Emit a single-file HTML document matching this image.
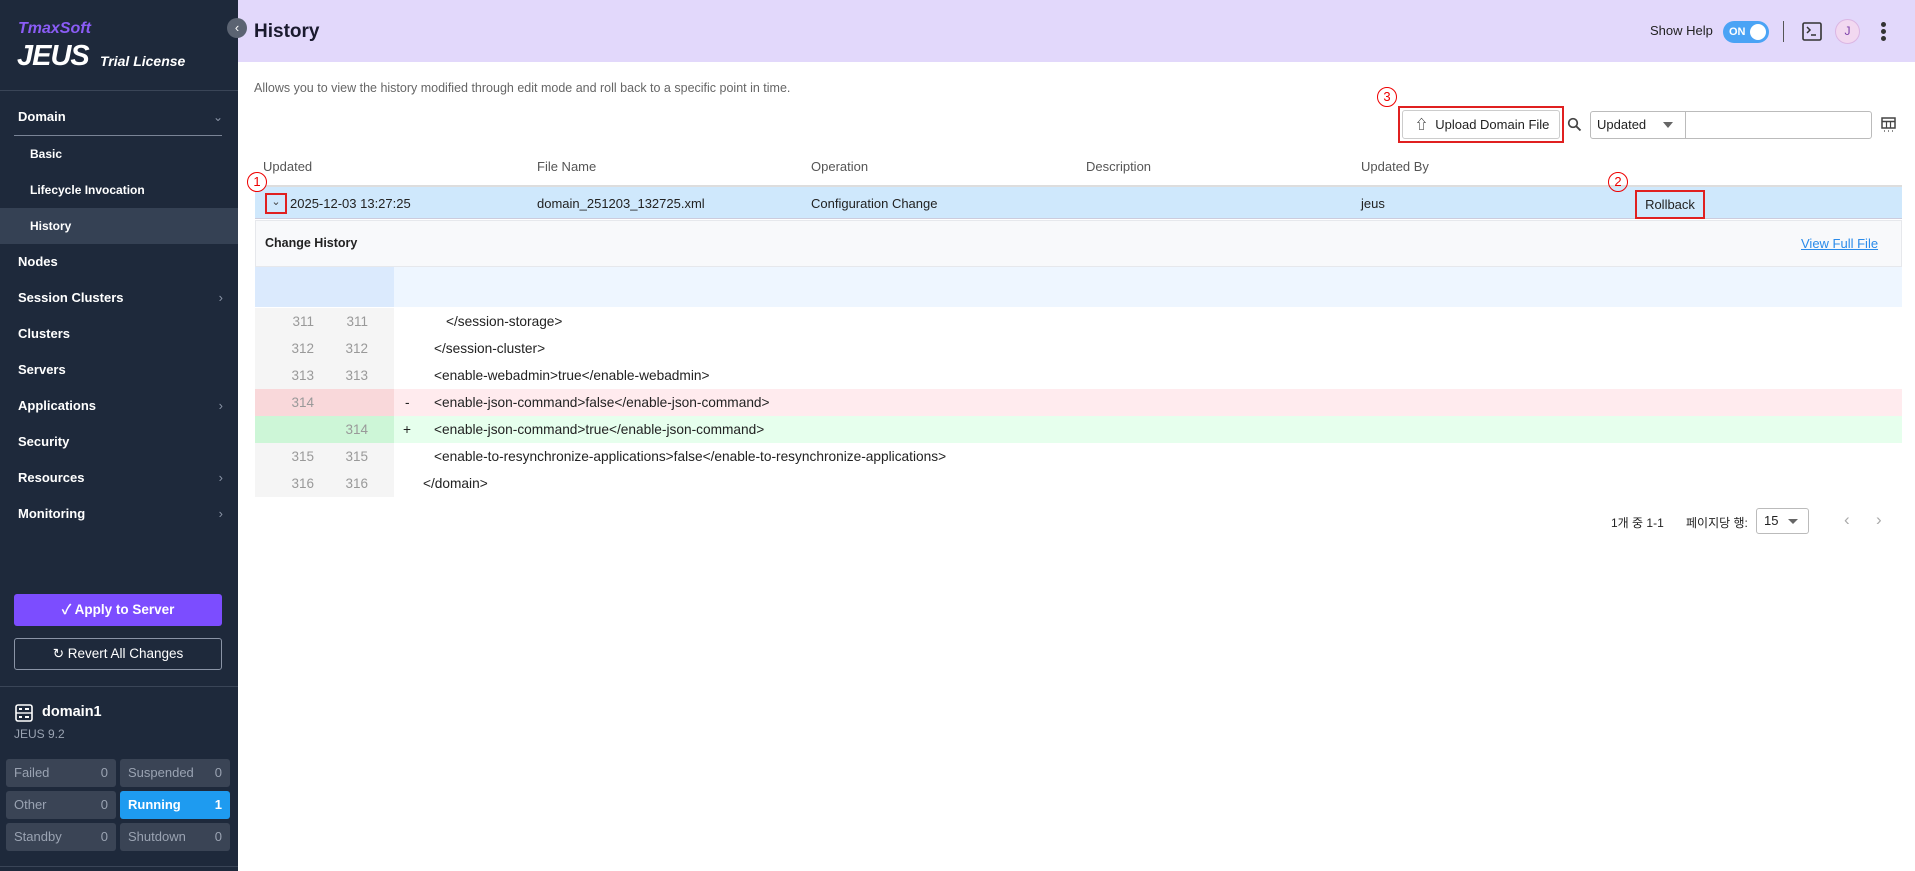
<!DOCTYPE html>
<html><head><meta charset="utf-8"><style>
*{box-sizing:border-box;margin:0;padding:0}
body{width:1915px;height:871px;overflow:hidden;font-family:"Liberation Sans","Noto Sans CJK KR",sans-serif;background:#fff;position:relative;color:#222}
.abs{position:absolute;white-space:nowrap}
#sb{position:absolute;left:0;top:0;width:238px;height:871px;background:#1e293b;color:#fff}
.nav{position:absolute;left:18px;font-size:13px;font-weight:bold;line-height:36px;height:36px;width:205px}
.sub{left:30px;font-size:12px}
.chev{position:absolute;right:0;top:0;color:#8a94a6;font-weight:normal;font-size:13px}
.st{position:absolute;height:28px;width:110px;background:#3a4455;border-radius:3px;color:#9aa3b2;font-size:13px;line-height:28px;padding:0 8px}
.st b{position:absolute;right:8px;font-weight:normal}
.th{position:absolute;top:158px;font-size:13px;color:#555}
.dl{position:absolute;left:255px;width:1647px;height:27px;font-size:13.7px;line-height:27px}
.g1,.g2{position:absolute;top:0;height:27px;background:#f5f5f5;color:#999;text-align:right;font-size:13.5px}
.g1{left:0;width:70px;padding-right:11px}.g2{left:70px;width:69px;padding-right:26px}
.cd{position:absolute;top:0;color:#222}
</style></head><body>
<div id="sb">
 <div class="abs" style="left:18px;top:20px;font-size:16px;font-weight:bold;font-style:italic;color:#8b5cf6">TmaxSoft</div>
 <div class="abs" style="left:17px;top:40px;font-size:29px;font-weight:900;font-style:italic;color:#fff;letter-spacing:-1px">JEUS</div>
 <div class="abs" style="left:100px;top:53px;font-size:14px;font-weight:bold;font-style:italic;color:#fff">Trial License</div>
 <div class="abs" style="left:0;top:90px;width:238px;height:1px;background:#3a4557"></div>
 <div class="nav" style="top:99px">Domain<span class="chev" style="font-size:12px">&#8964;</span></div>
 <div class="abs" style="left:14px;top:135px;width:208px;height:1px;background:#7a8496"></div>
 <div class="nav sub" style="top:136px">Basic</div>
 <div class="nav sub" style="top:172px">Lifecycle Invocation</div>
 <div style="position:absolute;left:0;top:208px;width:238px;height:36px;background:#354154"></div>
 <div class="nav sub" style="top:208px">History</div>
 <div class="nav" style="top:244px">Nodes</div>
 <div class="nav" style="top:280px">Session Clusters<span class="chev">›</span></div>
 <div class="nav" style="top:316px">Clusters</div>
 <div class="nav" style="top:352px">Servers</div>
 <div class="nav" style="top:388px">Applications<span class="chev">›</span></div>
 <div class="nav" style="top:424px">Security</div>
 <div class="nav" style="top:460px">Resources<span class="chev">›</span></div>
 <div class="nav" style="top:496px">Monitoring<span class="chev">›</span></div>
 <div class="abs" style="left:14px;top:594px;width:208px;height:32px;background:#7c4dff;border-radius:3px;text-align:center;line-height:32px;font-size:13.5px;font-weight:bold">✓ Apply to Server</div>
 <div class="abs" style="left:14px;top:638px;width:208px;height:32px;border:1px solid #8a94a6;border-radius:3px;text-align:center;line-height:30px;font-size:13.5px">↻ Revert All Changes</div>
 <div class="abs" style="left:0;top:686px;width:238px;height:1px;background:#3a4557"></div>
 <svg class="abs" style="left:15px;top:704px" width="18" height="18" viewBox="0 0 18 18"><rect x="1" y="1" width="16" height="16" rx="2" fill="none" stroke="#fff" stroke-width="1.6"/><line x1="1" y1="9" x2="17" y2="9" stroke="#fff" stroke-width="1.4"/><rect x="4" y="4" width="3" height="2" fill="#fff"/><rect x="10" y="4" width="4" height="2" fill="#fff"/><rect x="4" y="12" width="3" height="2" fill="#fff"/><rect x="10" y="12" width="4" height="2" fill="#fff"/></svg>
 <div class="abs" style="left:42px;top:704px;font-size:14.5px;font-weight:bold">domain1</div>
 <div class="abs" style="left:14px;top:727px;font-size:12px;color:#9aa3b2">JEUS 9.2</div>
 <div class="st" style="left:6px;top:759px">Failed<b>0</b></div>
 <div class="st" style="left:120px;top:759px">Suspended<b>0</b></div>
 <div class="st" style="left:6px;top:791px">Other<b>0</b></div>
 <div class="st" style="left:120px;top:791px;background:#1e9bf0;color:#fff;font-weight:bold">Running<b style="font-weight:bold">1</b></div>
 <div class="st" style="left:6px;top:823px">Standby<b>0</b></div>
 <div class="st" style="left:120px;top:823px">Shutdown<b>0</b></div>
 <div class="abs" style="left:0;top:866px;width:238px;height:1px;background:#3a4557"></div>
</div>
<div class="abs" style="left:238px;top:0;width:1677px;height:62px;background:#e2d8fb"></div>
<div class="abs" style="left:227px;top:18px;width:20px;height:20px;border-radius:50%;background:#5b6372;color:#fff;font-size:13px;line-height:19px;text-align:center">‹</div>
<div class="abs" style="left:254px;top:21px;font-size:19px;font-weight:bold;color:#1a1a2e">History</div>
<div class="abs" style="left:1650px;top:23px;font-size:13px;color:#222">Show Help</div>
<div class="abs" style="left:1723px;top:21px;width:46px;height:22px;border-radius:11px;background:#4aa3f5;color:#fff;font-size:11px;font-weight:bold;line-height:22px;padding-left:6px">ON<span style="position:absolute;right:3px;top:3px;width:16px;height:16px;border-radius:50%;background:#fff"></span></div>
<div class="abs" style="left:1783px;top:21px;width:1px;height:21px;background:#555"></div>
<svg class="abs" style="left:1802px;top:22px" width="20" height="19" viewBox="0 0 20 19"><rect x="1" y="1" width="18" height="17" rx="1.5" fill="none" stroke="#333" stroke-width="1.6"/><path d="M5 5l3 3-3 3" fill="none" stroke="#333" stroke-width="1.5"/><line x1="9" y1="13" x2="14" y2="13" stroke="#333" stroke-width="1.5"/></svg>
<div class="abs" style="left:1835px;top:19px;width:25px;height:25px;border-radius:50%;background:#f2d8f0;border:1px solid #dbb6e3;color:#7b3ea8;font-size:12px;text-align:center;line-height:23px">J</div>
<div class="abs" style="left:1881px;top:22px;width:5px;height:5px;border-radius:50%;background:#333;box-shadow:0 7px 0 #333,0 14px 0 #333"></div>
<div class="abs" style="left:254px;top:81px;font-size:12.5px;color:#666">Allows you to view the history modified through edit mode and roll back to a specific point in time.</div>
<div class="abs" style="left:1377px;top:87px;width:20px;height:20px;border:1.5px solid #e00;border-radius:50%;color:#e00;font-size:13px;text-align:center;line-height:17px">3</div>
<div class="abs" style="left:1398px;top:106px;width:166px;height:37px;border:2px solid #e02020"></div>
<div class="abs" style="left:1402px;top:110px;width:158px;height:29px;border:1px solid #ccc;border-radius:3px;font-size:13px;line-height:27px;padding-left:12px">⇧&nbsp; Upload Domain File</div>
<svg class="abs" style="left:1567px;top:117px" width="15" height="15" viewBox="0 0 15 15"><circle cx="6" cy="6" r="4.3" fill="none" stroke="#444" stroke-width="1.7"/><line x1="9" y1="9" x2="13.5" y2="13.5" stroke="#444" stroke-width="1.9"/></svg>
<div class="abs" style="left:1590px;top:111px;width:282px;height:28px;border:1px solid #bbb;border-radius:3px"></div>
<div class="abs" style="left:1685px;top:111px;width:1px;height:28px;background:#bbb"></div>
<div class="abs" style="left:1597px;top:117px;font-size:13px">Updated</div>
<div class="abs" style="left:1663px;top:122px;border:5px solid transparent;border-top:6px solid #666"></div>
<svg class="abs" style="left:1881px;top:117px" width="15" height="16" viewBox="0 0 15 16"><rect x="1" y="1" width="13" height="10" fill="none" stroke="#444" stroke-width="1.5"/><line x1="1" y1="4.5" x2="14" y2="4.5" stroke="#444" stroke-width="1.5"/><line x1="5.5" y1="4.5" x2="5.5" y2="11" stroke="#444" stroke-width="1.2"/><line x1="9.5" y1="4.5" x2="9.5" y2="11" stroke="#444" stroke-width="1.2"/><path d="M3 14h1M7 14h1M11 14h1" stroke="#444" stroke-width="1.2"/></svg>
<div class="th" style="left:263px;top:159px">Updated</div>
<div class="th" style="left:537px;top:159px">File Name</div>
<div class="th" style="left:811px;top:159px">Operation</div>
<div class="th" style="left:1086px;top:159px">Description</div>
<div class="th" style="left:1361px;top:159px">Updated By</div>
<div class="abs" style="left:255px;top:185px;width:1647px;height:2px;background:#ddd"></div>
<div class="abs" style="left:255px;top:187px;width:1647px;height:32px;background:#cfe8fc;border-bottom:1px solid #ccd"></div>
<div class="abs" style="left:247px;top:172px;width:20px;height:20px;border:1.5px solid #e00;border-radius:50%;color:#e00;font-size:13px;text-align:center;line-height:17px;background:#fff">1</div>
<div class="abs" style="left:265px;top:193px;width:22px;height:21px;border:2px solid #e02020;color:#444;font-size:11px;text-align:center;line-height:14px">&#8964;</div>
<div class="abs" style="left:290px;top:196px;font-size:13px">2025-12-03 13:27:25</div>
<div class="abs" style="left:537px;top:196px;font-size:13px">domain_251203_132725.xml</div>
<div class="abs" style="left:811px;top:196px;font-size:13px">Configuration Change</div>
<div class="abs" style="left:1361px;top:196px;font-size:13px">jeus</div>
<div class="abs" style="left:1608px;top:172px;width:20px;height:20px;border:1.5px solid #e00;border-radius:50%;color:#e00;font-size:13px;text-align:center;line-height:17px">2</div>
<div class="abs" style="left:1635px;top:190px;width:70px;height:29px;border:2px solid #e02020;font-size:13px;text-align:center;line-height:25px">Rollback</div>
<div class="abs" style="left:255px;top:220px;width:1647px;height:47px;background:#f8f9fb;border:1px solid #e6e8ec"></div>
<div class="abs" style="left:265px;top:236px;font-size:12.5px;font-weight:bold">Change History</div>
<div class="abs" style="left:1801px;top:236px;font-size:13px;color:#2a8bea;text-decoration:underline">View Full File</div>
<div class="abs" style="left:255px;top:267px;width:139px;height:40px;background:#dbeafd"></div>
<div class="abs" style="left:394px;top:267px;width:1508px;height:40px;background:#eef6ff"></div>
<div class="dl" style="top:308px"><div class="g1">311</div><div class="g2">311</div><div class="cd" style="left:191px">&lt;/session-storage&gt;</div></div>
<div class="dl" style="top:335px"><div class="g1">312</div><div class="g2">312</div><div class="cd" style="left:179px">&lt;/session-cluster&gt;</div></div>
<div class="dl" style="top:362px"><div class="g1">313</div><div class="g2">313</div><div class="cd" style="left:179px">&lt;enable-webadmin&gt;true&lt;/enable-webadmin&gt;</div></div>
<div class="dl" style="top:389px;background:#ffebee"><div class="g1" style="background:#f9d8da">314</div><div class="g2" style="background:#f9d8da"></div><div class="cd" style="left:150px">-</div><div class="cd" style="left:179px">&lt;enable-json-command&gt;false&lt;/enable-json-command&gt;</div></div>
<div class="dl" style="top:416px;background:#e6ffed"><div class="g1" style="background:#cdf6d7"></div><div class="g2" style="background:#cdf6d7">314</div><div class="cd" style="left:148px">+</div><div class="cd" style="left:179px">&lt;enable-json-command&gt;true&lt;/enable-json-command&gt;</div></div>
<div class="dl" style="top:443px"><div class="g1">315</div><div class="g2">315</div><div class="cd" style="left:179px">&lt;enable-to-resynchronize-applications&gt;false&lt;/enable-to-resynchronize-applications&gt;</div></div>
<div class="dl" style="top:470px"><div class="g1">316</div><div class="g2">316</div><div class="cd" style="left:168px">&lt;/domain&gt;</div></div>
<div class="abs" style="left:1611px;top:514px;font-size:12px">1개 중 1-1</div>
<div class="abs" style="left:1686px;top:514px;font-size:12px">페이지당 행:</div>
<div class="abs" style="left:1756px;top:508px;width:53px;height:26px;border:1px solid #bbb;border-radius:3px;font-size:13px;line-height:24px;padding-left:7px">15</div>
<div class="abs" style="left:1788px;top:519px;border:5px solid transparent;border-top:5px solid #666"></div>
<div class="abs" style="left:1844px;top:510px;font-size:17px;color:#aaa">‹</div>
<div class="abs" style="left:1876px;top:510px;font-size:17px;color:#aaa">›</div>
</body></html>
